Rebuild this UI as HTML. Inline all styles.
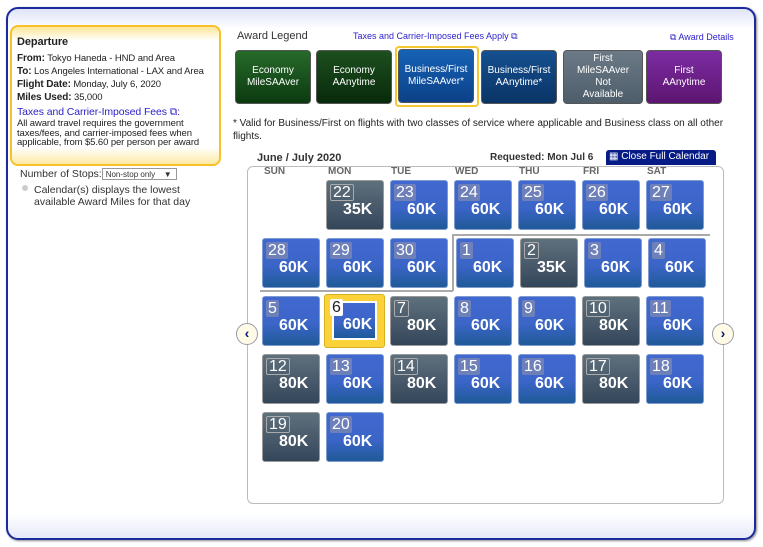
<!DOCTYPE html>
<html><head><meta charset="utf-8"><style>
*{box-sizing:border-box;margin:0;padding:0}
body{width:763px;height:547px;background:#fff;font-family:"Liberation Sans",Arial,sans-serif;position:relative;overflow:hidden}
.a{position:absolute}
#outer{left:6px;top:7px;width:750px;height:533px;border:2px solid #1b2a9c;border-radius:12px;background:linear-gradient(#dfe3f7 0,#fff 20px,#fff 505px,#e6e8f8 530px);box-shadow:1px 1px 2px #888}
#dep{left:10px;top:25px;width:211px;height:141px;border:2px solid #f6c12b;border-radius:8px;background:linear-gradient(#fde79a 0,#fff 14px,#fff 120px,#fde79a 139px);padding:9px 5px;font-size:9.5px;color:#222;line-height:13px;white-space:nowrap;letter-spacing:-0.1px}
#dep b{font-size:10px}
.btn{top:50px;width:76px;height:54px;border-radius:4px;color:#fff;font-size:10px;text-align:center;display:flex;align-items:center;justify-content:center;line-height:12px;border:1px solid #555}
.cell{width:58px;height:50px;border-radius:3px;color:#fff;font-weight:bold;font-size:16px;border:1px solid #7f9bd0}
.bl{background:linear-gradient(#4168d0 0,#3c65c8 55%,#1f5a98 100%)}
.gr{background:linear-gradient(#5f707d,#34465a);border-color:#999}
.num{position:absolute;left:3px;top:3px;padding:0 2px;height:17px;font-weight:normal;font-size:16px;line-height:17px;background:rgba(150,150,170,.55);border-radius:2px}
.gr .num{background:none;border:1px solid #aaa;line-height:15px}
.val{position:absolute;left:16px;top:20px}
.hd{top:166px;font-size:10px;font-weight:bold;color:#666}
</style></head><body>
<div id="outer" class="a"></div>
<div id="dep" class="a">
<div style="font-weight:bold;font-size:11px;margin-bottom:3px">Departure</div>
<div><b>From:</b> Tokyo Haneda - HND and Area</div>
<div><b>To:</b> Los Angeles International - LAX and Area</div>
<div><b>Flight Date:</b> Monday, July 6, 2020</div>
<div><b>Miles Used:</b> 35,000</div>
<div style="color:#2a1fc8;font-size:10.5px;margin-top:2px">Taxes and Carrier-Imposed Fees ⧉:</div>
<div style="line-height:9.5px;font-size:9.5px;white-space:normal">All award travel requires the government taxes/fees, and carrier-imposed fees when applicable, from $5.60 per person per award</div>
</div>
<div class="a" style="left:20px;top:168px;font-size:10.5px;color:#333">Number of Stops:<span style="display:inline-block;border:1px solid #999;font-size:8px;width:75px;height:12px;line-height:11px;padding-left:3px;vertical-align:middle;position:relative">Non-stop only<span style="position:absolute;right:4px;font-size:8px">▼</span></span></div>
<div class="a" style="left:22px;top:185px;width:6px;height:6px;border-radius:50%;background:#ccc"></div>
<div class="a" style="left:34px;top:184px;font-size:10.5px;color:#333;line-height:12px">Calendar(s) displays the lowest<br>available Award Miles for that day</div>

<div class="a" style="left:237px;top:30px;font-size:11px;color:#333">Award Legend</div>
<div class="a" style="left:353px;top:31px;font-size:9px;color:#2a1fc8">Taxes and Carrier-Imposed Fees Apply ⧉</div>
<div class="a" style="left:670px;top:32px;font-size:9px;color:#2a1fc8">⧉ Award Details</div>
<div class="a btn" style="left:235px;background:linear-gradient(#276a2a,#0c3a10)">Economy<br>MileSAAver</div>
<div class="a btn" style="left:316px;background:linear-gradient(#1d4f1f,#082a0b)">Economy<br>AAnytime</div>
<div class="a" style="left:395px;top:46px;width:84px;height:61px;border:2px solid #f5c730;border-radius:4px"></div>
<div class="a btn" style="left:398px;top:49px;background:linear-gradient(#1662b5,#0c4188)">Business/First<br>MileSAAver*</div>
<div class="a btn" style="left:481px;background:linear-gradient(#155090,#0a3466)">Business/First<br>AAnytime*</div>
<div class="a btn" style="left:563px;width:80px;background:linear-gradient(#6b7a86,#4d5d69)">First<br>MileSAAver<br>Not<br>Available</div>
<div class="a btn" style="left:646px;background:linear-gradient(#7d2ca2,#5c1570)">First<br>AAnytime</div>
<div class="a" style="left:233px;top:117px;width:520px;font-size:10px;color:#222;line-height:13px">* Valid for Business/First on flights with two classes of service where applicable and Business class on all other flights.</div>

<div class="a" style="left:257px;top:152px;font-size:11px;font-weight:bold;color:#333">June / July 2020</div>
<div class="a" style="left:490px;top:152px;font-size:10px;font-weight:bold;color:#333">Requested: Mon Jul 6</div>
<div class="a" style="left:606px;top:150px;width:110px;height:15px;background:#071b86;color:#fff;font-size:10px;border-radius:3px 3px 0 0;padding:1px 3px;white-space:nowrap">▦ Close Full Calendar</div>
<div class="a" style="left:247px;top:166px;width:477px;height:338px;border:1px solid #bbb;border-radius:6px"></div>
<div class="a hd" style="left:264px">SUN</div><div class="a hd" style="left:328px">MON</div><div class="a hd" style="left:391px">TUE</div><div class="a hd" style="left:455px">WED</div><div class="a hd" style="left:519px">THU</div><div class="a hd" style="left:583px">FRI</div><div class="a hd" style="left:647px">SAT</div>
<div class="a" style="left:260px;top:290px;width:193px;border-top:2px solid #aaa"></div>
<div class="a" style="left:452px;top:234px;height:57px;border-left:2px solid #aaa"></div>
<div class="a" style="left:452px;top:234px;width:258px;border-top:2px solid #aaa"></div>

<div class="a" style="left:236px;top:323px;width:22px;height:22px;border-radius:50%;border:1px solid #99a;background:#fffbe6;color:#001a6e;font-weight:bold;font-size:14px;text-align:center;line-height:19px">‹</div>
<div class="a" style="left:712px;top:323px;width:22px;height:22px;border-radius:50%;border:1px solid #99a;background:#fffbe6;color:#001a6e;font-weight:bold;font-size:14px;text-align:center;line-height:19px">›</div>

<div class="a cell gr" style="left:326px;top:180px"><span class="num">22</span><span class="val">35K</span></div>
<div class="a cell bl" style="left:390px;top:180px"><span class="num">23</span><span class="val">60K</span></div>
<div class="a cell bl" style="left:454px;top:180px"><span class="num">24</span><span class="val">60K</span></div>
<div class="a cell bl" style="left:518px;top:180px"><span class="num">25</span><span class="val">60K</span></div>
<div class="a cell bl" style="left:582px;top:180px"><span class="num">26</span><span class="val">60K</span></div>
<div class="a cell bl" style="left:646px;top:180px"><span class="num">27</span><span class="val">60K</span></div>

<div class="a cell bl" style="left:262px;top:238px"><span class="num">28</span><span class="val">60K</span></div>
<div class="a cell bl" style="left:326px;top:238px"><span class="num">29</span><span class="val">60K</span></div>
<div class="a cell bl" style="left:390px;top:238px"><span class="num">30</span><span class="val">60K</span></div>
<div class="a cell bl" style="left:456px;top:238px"><span class="num">1</span><span class="val">60K</span></div>
<div class="a cell gr" style="left:520px;top:238px"><span class="num">2</span><span class="val">35K</span></div>
<div class="a cell bl" style="left:584px;top:238px"><span class="num">3</span><span class="val">60K</span></div>
<div class="a cell bl" style="left:648px;top:238px"><span class="num">4</span><span class="val">60K</span></div>

<div class="a cell bl" style="left:262px;top:296px"><span class="num">5</span><span class="val">60K</span></div>
<div class="a cell" style="left:324px;top:294px;width:61px;height:54px;background:#fcd23a;border:1px solid #d9b020;border-radius:3px"><div class="a bl" style="left:7px;top:6px;width:45px;height:39px;border:2px solid #fff"></div><span class="num" style="background:#fff;color:#222;left:5px;top:4px">6</span><span class="val" style="left:18px;top:21px">60K</span></div>
<div class="a cell gr" style="left:390px;top:296px"><span class="num">7</span><span class="val">80K</span></div>
<div class="a cell bl" style="left:454px;top:296px"><span class="num">8</span><span class="val">60K</span></div>
<div class="a cell bl" style="left:518px;top:296px"><span class="num">9</span><span class="val">60K</span></div>
<div class="a cell gr" style="left:582px;top:296px"><span class="num">10</span><span class="val">80K</span></div>
<div class="a cell bl" style="left:646px;top:296px"><span class="num">11</span><span class="val">60K</span></div>

<div class="a cell gr" style="left:262px;top:354px"><span class="num">12</span><span class="val">80K</span></div>
<div class="a cell bl" style="left:326px;top:354px"><span class="num">13</span><span class="val">60K</span></div>
<div class="a cell gr" style="left:390px;top:354px"><span class="num">14</span><span class="val">80K</span></div>
<div class="a cell bl" style="left:454px;top:354px"><span class="num">15</span><span class="val">60K</span></div>
<div class="a cell bl" style="left:518px;top:354px"><span class="num">16</span><span class="val">60K</span></div>
<div class="a cell gr" style="left:582px;top:354px"><span class="num">17</span><span class="val">80K</span></div>
<div class="a cell bl" style="left:646px;top:354px"><span class="num">18</span><span class="val">60K</span></div>

<div class="a cell gr" style="left:262px;top:412px"><span class="num">19</span><span class="val">80K</span></div>
<div class="a cell bl" style="left:326px;top:412px"><span class="num">20</span><span class="val">60K</span></div>
</body></html>
